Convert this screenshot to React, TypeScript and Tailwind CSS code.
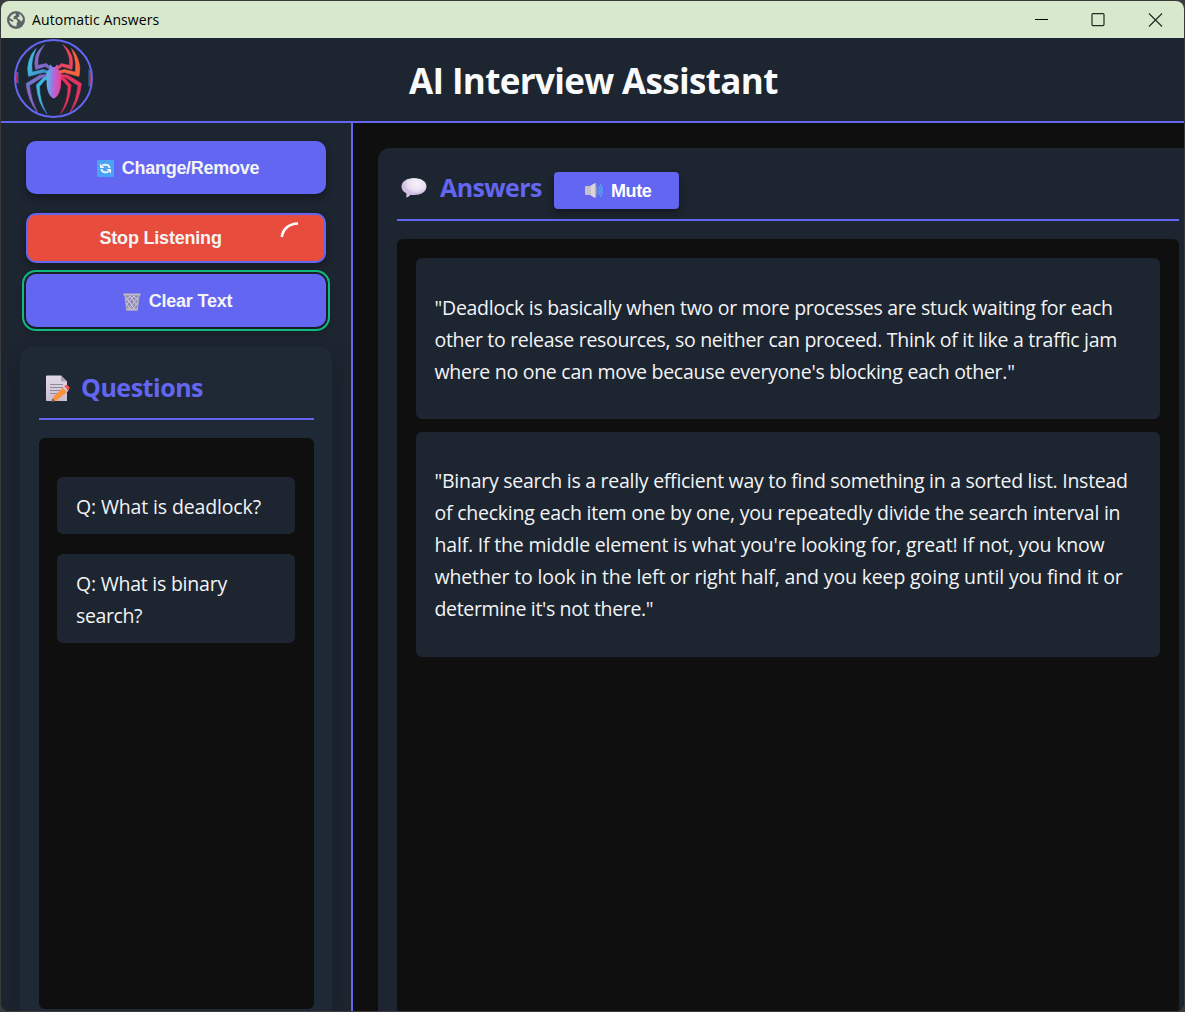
import React from "react";

const ui = "font-['Open_Sans','Noto_Sans',sans-serif]";
const arial = "font-['Liberation_Sans',Arial,sans-serif]";

function Globe() {
  return (
    <svg className="ml-[6px] size-[18px]" viewBox="0 0 18 18">
      <circle cx="9" cy="9" r="9" fill="#5d6468" />
      <path d="M2.500 7C3.500 4.200 6 2.600 9 2.500L8.500 4.700l-2 .8.5 1.700-1.500.8 3.800.2 1.500 2.200-1 1.300-.3 3.600C5 15.300 2.200 12 2.500 9l2 1.500 1.800.3.2-1.300z" fill="#d8e8cc" />
      <path d="M12 2.800c2.300 1.100 3.800 3.200 3.900 6L14 10.500l-1.500-2-2-.700.3-1.600 1.800-.700z" fill="#d8e8cc" />
    </svg>
  );
}

const legs = [
  "M36 31 31.500 27.500 21.500 30.500Q20 24 21.500 17.500Q24 10.500 30.500 5.500Q25.500 13 24.200 19L23.800 26.200 32.500 24.500 38 30z",
  "M36 35 29 33.500 14.500 37.500Q12.500 29 15.200 21Q17.500 14 22 9.500Q18.500 18 17.800 25L18.200 33 29 30.500 37 32.500z",
  "M37 37.500 28 38.500 15.500 46.500Q17 61 23.500 73.500Q14 62 12 44.500L26 36 37 35z",
  "M38 39.500 31 41 25.500 47.500Q25.500 62 33 75Q24 65 22.300 46L29.500 38.500 38 36.500z",
];

function Spider() {
  return (
    <svg className="-mt-[2px] ml-[13px] size-[79px] shrink-0" viewBox="0 0 79 79">
      <defs>
        <linearGradient id="legL" x1="0" y1="0" x2=".7" y2="1">
          <stop stopColor="#35b7e0" /><stop offset=".5" stopColor="#45b4e0" /><stop offset="1" stopColor="#3f86c8" />
        </linearGradient>
        <linearGradient id="legP" x1="0" y1="0" x2=".7" y2="1">
          <stop stopColor="#4c86c8" /><stop offset=".4" stopColor="#8a66c6" /><stop offset="1" stopColor="#7b6cce" />
        </linearGradient>
        <linearGradient id="body" x1="0" y1=".4" x2="1" y2=".5">
          <stop stopColor="#45c0ec" /><stop offset=".5" stopColor="#b067dc" /><stop offset="1" stopColor="#f2418c" />
        </linearGradient>
      </defs>
      <rect x="1.500" y="33" width="2.500" height="11" fill="#d41f50" />
      <rect x="75" y="31" width="2.500" height="16" fill="#b42f38" />
      <path d="M4.500 33v12M74.500 30v18" stroke="#164b73" strokeWidth="1" />
      <g strokeWidth=".5">
        <path d={legs[0]} fill="url(#legP)" stroke="url(#legP)" />
        <path d={legs[1]} fill="url(#legL)" stroke="url(#legL)" />
        <path d={legs[2]} fill="url(#legP)" stroke="url(#legP)" />
        <path d={legs[3]} fill="url(#legL)" stroke="url(#legL)" />
      </g>
      <g transform="translate(79.500 0) scale(-1 1)" strokeWidth=".5">
        <path d={legs[0]} fill="#ec4560" stroke="#ec4560" />
        <path d={legs[1]} fill="#f8643f" stroke="#f8643f" />
        <path d={legs[2]} fill="#e63460" stroke="#e63460" />
        <path d={legs[3]} fill="#ea3158" stroke="#ea3158" />
      </g>
      <path d="M37 29.500 35 27 36.500 25.500 38.500 28h2.500l2-2.500L44.500 27 42.500 29.500c3.500 1.500 4.800 4 4.500 8v6c0 8-3 14.500-7.200 16-4.200-1.500-7.200-8-7.200-16v-6c-.3-4 .7-6.500 4.400-8z" fill="url(#body)" />
      <circle cx="39.500" cy="39.500" r="38.500" fill="none" stroke="#6366f1" strokeWidth="2" />
    </svg>
  );
}

function Refresh() {
  return (
    <svg className="size-[17px]" viewBox="0 0 17 17">
      <rect width="17" height="17" rx="1" fill="#4ba3f5" />
      <path d="M5.500 5.500C8 4 12.300 4.500 12.500 8M11.500 11.500C9 13 4.700 12.500 4.500 9" fill="none" stroke="#eef5ff" strokeWidth="1.900" />
      <path d="M3 3.500v4.500h4.500zM14 13.500V9H9.500z" fill="#eef5ff" />
    </svg>
  );
}

function Trash() {
  return (
    <svg className="h-[18px] w-[18px]" viewBox="0 0 18 18">
      <path d="M1.500 2h15l-2 15.500h-11z" fill="#8f8bb4" />
      <path d="m3 4 9 13M7 3l7 9M11 3l4 5M3 10l5 7M15 4 5 17M11 3l-8 9M7 3 3 8M15 9l-6 8" stroke="#d3d0da" strokeWidth="1" />
      <path d="M.5 1.500h17M3.500 16.500h11" stroke="#c0bcc6" strokeWidth="2" />
      <path d="m1.800 2 2 15M16.200 2l-2 15" stroke="#b5b1c1" strokeWidth="1" />
    </svg>
  );
}

function Note() {
  return (
    <svg className="h-[27px] w-[24px]" viewBox="0 0 24 27">
      <defs><linearGradient id="paper" x2="0" y2="1"><stop stopColor="#e1d9e7" /><stop offset="1" stopColor="#c9c0d2" /></linearGradient></defs>
      <path d="M1 .5h14l6 6v19.500H1a1 1 0 0 1-1-1v-23.500a1 1 0 0 1 1-1z" fill="url(#paper)" />
      <path d="M15 .5V5.500a1 1 0 0 0 1 1h5z" fill="#aaa1b6" />
      <path d="M4 9.500h13M4 12.500h13M4 15.500h12M4 18.500h8" stroke="#8f8998" />
      <path d="M17 12.500 21 17 10 26 5.500 26.500 7 22z" fill="#fb923f" />
      <path d="m17 12.500 1.500-1.300 4 4.500L21 17z" fill="#d7c8d5" />
      <path d="M18.300 11.300 20 10c1.500-.500 4.300 2 3.500 3.800L22.300 15.500z" fill="#f4564f" />
      <path d="m6.500 23.500 2 2-3 1z" fill="#7a4650" />
    </svg>
  );
}

function Bubble() {
  return (
    <svg className="-ml-px h-[20px] w-[26px]" viewBox="0 0 26 20">
      <defs><radialGradient id="bub" cx=".6" cy=".3"><stop stopColor="#f6f2f8" /><stop offset=".7" stopColor="#e8dff0" /><stop offset="1" stopColor="#cfc0df" /></radialGradient></defs>
      <path d="M13 0c7 0 12.500 3.500 12.500 8.500S20 17 13 17c-1.500 0-2.500 0-3.500-.3C8 18.500 6.500 19.300 5 19.500c.6-1.500.6-3 .3-4.200C2.300 13.800.5 11.500.5 8.500.5 3.500 6 0 13 0z" fill="url(#bub)" />
    </svg>
  );
}

function Speaker() {
  return (
    <svg className="h-[16px] w-[18px]" viewBox="0 0 18 16">
      <path d="M0 3.500 1 3h4l5.500-3v15L5 12H1L0 11.500z" fill="#c5c0cc" />
      <path d="M6 2.500 10.500 0v15L6 12.500z" fill="#d9d5dc" />
      <path d="M10.500 0c1.700 2 1.700 13 0 15z" fill="#a8a3b0" />
      <path d="M12.700 5c.8 1.500.8 3.500 0 5" fill="none" stroke="#52a0ee" />
      <path d="M13.800 3c1.800 2.500 1.800 6.500 0 9M15.200 1.300c2.600 3.500 2.600 9 0 12.500" fill="none" stroke="#45b4f4" strokeWidth="1.200" />
    </svg>
  );
}

function Line({ t, ls }: { t: string; ls: string }) {
  return <div className="whitespace-nowrap"><span style={{ letterSpacing: ls }}>{t}</span></div>;
}

export default function App() {
  return (
    <div className={`flex h-[1012px] w-[1185px] flex-col overflow-hidden bg-[#3b3a3d] p-px ${ui}`}>
      <div className="flex min-h-0 flex-1 flex-col overflow-hidden rounded-[8px] bg-[#0f0f0f]">
        <div className="flex h-[37px] shrink-0 items-center bg-[#d8e8cc] text-black">
          <Globe />
          <span className="ml-[7px] flex-1 text-[14px] tracking-[0.100px]">Automatic Answers</span>
          <svg className="mr-[21px] h-[14px] w-[130px]" viewBox="0 0 130 14" fill="none" stroke="#222b20">
            <path d="M2 6.500h13" stroke="#000" />
            <rect x="59" y=".6" width="12" height="12" rx="1" strokeWidth="1.200" />
            <path d="m116 .5 13 13M129 .5 116 13.500" strokeWidth="1.100" />
          </svg>
        </div>
        <header className="flex h-[85px] shrink-0 items-center border-b-2 border-[#6366f1] bg-[#1d2530]">
          <Spider />
          <h1 className="ml-[316px] mt-[3px] whitespace-nowrap text-[35px] font-bold leading-[48px] tracking-[-0.650px] text-[#f9fafb]">AI Interview Assistant</h1>
        </header>
        <div className="flex min-h-0 flex-1">
          <aside className="flex w-[352px] shrink-0 flex-col border-r-2 border-[#6366f1] bg-[#1d2530] px-[19px] pt-[18px]">
            <div className={`mx-[6px] flex w-[300px] flex-col text-[18px] font-bold text-[#f3f4f6] ${arial}`}>
              <button className="flex h-[53px] items-center justify-center gap-[8px] rounded-[10px] bg-[#6366f1] pl-[4px] pt-[2px] shadow-[0_4px_8px_rgba(0,0,0,0.3)]">
                <Refresh /><span className="tracking-[-0.280px]">Change/Remove</span>
              </button>
              <button className="mt-[19px] flex h-[50px] items-center rounded-[10px] border-2 border-[#6366f1] bg-[#e74c3c] shadow-[0_4px_8px_rgba(0,0,0,0.3)]">
                <span className="ml-[71.500px] tracking-[-0.200px]">Stop Listening</span>
                <svg className="-mt-[17px] ml-[58px] h-[17px] w-[19px]" viewBox="0 0 19 17" fill="none" stroke="#fff" strokeWidth="2.700">
                  <path d="M1.800 16C2.800 8.500 8.500 2.700 18 2.500" />
                </svg>
              </button>
              <button className="mt-[10.500px] flex h-[53px] items-center justify-center gap-[8px] rounded-[10px] bg-[#6366f1] pl-[3px] pt-[3px] shadow-[0_4px_8px_rgba(0,0,0,0.3)] outline-2 outline-offset-2 outline-[#10b981]">
                <Trash /><span className="tracking-[-0.200px]">Clear Text</span>
              </button>
            </div>
            <section className="mt-[20.500px] flex w-[312px] flex-1 flex-col rounded-t-[12px] bg-[#1f2935] px-[19px] pr-[18px] shadow-[0_8px_20px_rgba(0,0,0,0.25)]">
              <div className="flex h-[73px] shrink-0 items-center border-b-2 border-[#6366f1] pl-[7px] pt-[11px] text-[#6366f1]">
                <Note />
                <h2 className="ml-[11px] text-[25px] font-bold tracking-[-0.480px]">Questions</h2>
              </div>
              <div className="mt-[18px] flex h-[571px] flex-col gap-[20px] rounded-[6px] bg-[#0f0f0f] px-[18px] pt-[39px] text-[19.500px] leading-[32px] text-[#f3f4f6]">
                <div className="h-[57px] w-[238px] rounded-[6px] bg-[#1d2530] pl-[19px] pt-[14px]"><Line t="Q: What is deadlock?" ls="-0.14px" /></div>
                <div className="h-[89px] w-[238px] rounded-[6px] bg-[#1d2530] pl-[19px] pt-[14px]"><Line t="Q: What is binary" ls="-0.23px" /><Line t="search?" ls="-0.4px" /></div>
              </div>
            </section>
          </aside>
          <main className="flex min-w-0 flex-1 pl-[25px] pt-[25px]">
            <section className="flex min-w-0 flex-1 flex-col rounded-tl-[12px] bg-[#1d2530] pl-[19px] pr-[5px]">
              <div className="flex h-[73px] shrink-0 items-center border-b-2 border-[#6366f1] pl-[5px] pt-[8px] text-[#6366f1]">
                <Bubble />
                <h2 className="-mt-px ml-[13px] w-[102px] whitespace-nowrap text-[25px] font-bold leading-[34px] tracking-[-0.620px]">Answers</h2>
                <button className={`ml-[12px] mt-[5px] flex h-[37px] w-[125px] items-center rounded-[4px] bg-[#6366f1] pl-[31px] pt-[2px] text-[18px] font-bold text-white shadow-[0_4px_8px_rgba(0,0,0,0.35)] ${arial}`}>
                  <Speaker /><span className="ml-[8px] tracking-[-0.400px]">Mute</span>
                </button>
              </div>
              <div className="mt-[18px] flex flex-1 flex-col gap-[13px] rounded-t-[6px] bg-[#0f0f0f] px-[19px] pt-[19px] text-[19.500px] leading-[32px] text-[#f3f4f6]">
                <div className="h-[161px] rounded-[6px] bg-[#1d2530] pl-[18.500px] pt-[34px]">
                  <Line t={'"Deadlock is basically when two or more processes are stuck waiting for each'} ls="-0.27px" />
                  <Line t="other to release resources, so neither can proceed. Think of it like a traffic jam" ls="-0.3px" />
                  <Line t={'where no one can move because everyone\'s blocking each other."'} ls="-0.28px" />
                </div>
                <div className="h-[225px] rounded-[6px] bg-[#1d2530] pl-[18.500px] pt-[33px]">
                  <Line t={'"Binary search is a really efficient way to find something in a sorted list. Instead'} ls="-0.27px" />
                  <Line t="of checking each item one by one, you repeatedly divide the search interval in" ls="-0.23px" />
                  <Line t="half. If the middle element is what you're looking for, great! If not, you know" ls="-0.195px" />
                  <Line t="whether to look in the left or right half, and you keep going until you find it or" ls="-0.145px" />
                  <Line t={'determine it\'s not there."'} ls="-0.34px" />
                </div>
              </div>
            </section>
          </main>
        </div>
      </div>
    </div>
  );
}
